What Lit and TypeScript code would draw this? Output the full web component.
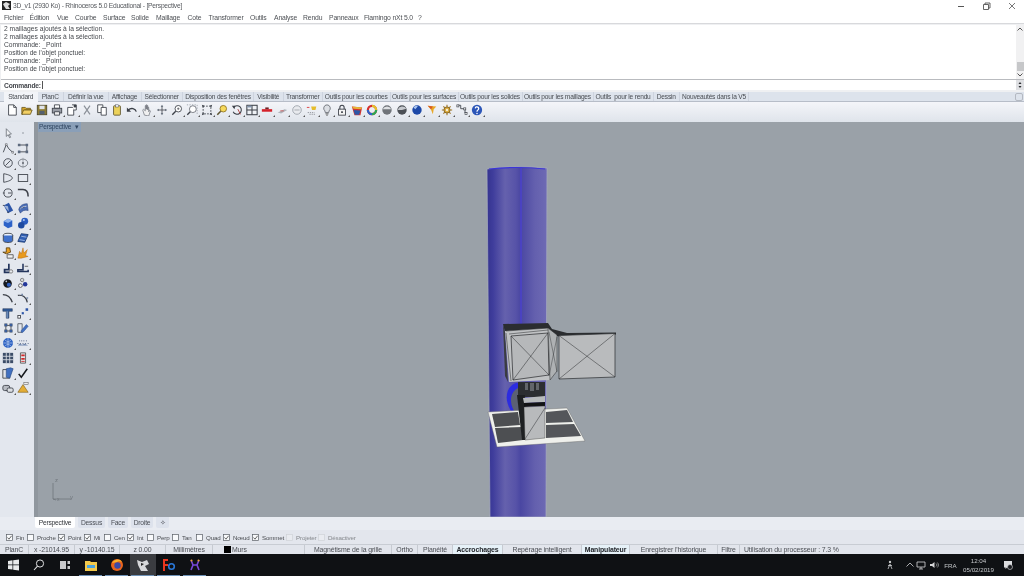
import { LitElement, html, css, svg } from 'lit';
import { customElement } from 'lit/decorators.js';

const MENU: Array<[string, number]> = [
  ['Fichier', 25.5], ['Édition', 27.5], ['Vue', 18], ['Courbe', 28], ['Surface', 28], ['Solide', 25],
  ['Maillage', 31.5], ['Cote', 21], ['Transformer', 41.5], ['Outils', 24], ['Analyse', 29], ['Rendu', 26],
  ['Panneaux', 35], ['Flamingo nXt 5.0', 54], ['?', 10],
];

const HISTORY = [
  '2 maillages ajoutés à la sélection.',
  '2 maillages ajoutés à la sélection.',
  'Commande: _Point',
  "Position de l'objet ponctuel:",
  'Commande: _Point',
  "Position de l'objet ponctuel:",
];

const TABS: Array<[string, number]> = [
  ['Standard', 33.5], ['PlanC', 26.5], ['Définir la vue', 44.5], ['Affichage', 33], ['Sélectionner', 41.5],
  ['Disposition des fenêtres', 71], ['Visibilité', 29.5], ['Transformer', 39.5], ['Outils pour les courbes', 67.5],
  ['Outils pour les surfaces', 68], ['Outils pour les solides', 64], ['Outils pour les maillages', 71],
  ['Outils  pour le rendu', 60], ['Dessin', 26.5], ['Nouveautés dans la V5', 69],
];

const VIEW_TABS: Array<[string, number]> = [['Perspective', 40], ['Dessus', 27], ['Face', 20], ['Droite', 22], ['✧', 13]];

const OSNAPS: Array<[string, number, boolean, boolean]> = [
  ['Fin', 21, true, false], ['Proche', 31, false, false], ['Point', 26, true, false], ['Mi', 20, true, false],
  ['Cen', 23, false, false], ['Int', 20, true, false], ['Perp', 25, false, false], ['Tan', 24, false, false],
  ['Quad', 27, false, false], ['Nœud', 29, true, false], ['Sommet', 34, true, false], ['Projeter', 32, false, true],
  ['Désactiver', 45, false, true],
];

const STATUS: Array<[string, number, string]> = [
  ['PlanC', 29, ''], ['x -21014.95', 46, ''], ['y -10140.15', 45, ''], ['z 0.00', 46, ''], ['Millimètres', 47, ''],
  ['Murs', 92, 'layer'], ['Magnétisme de la grille', 87, ''], ['Ortho', 26, ''], ['Planéité', 35, ''],
  ['Accrochages', 50, 'on'], ['Repérage intelligent', 79, ''], ['Manipulateur', 48, 'on'],
  ['Enregistrer l\'historique', 88, ''], ['Filtre', 22, ''], ['Utilisation du processeur : 7.3 %', 120, 'fill'],
];

const K = '#3c4048';

// toolbar artwork, all on a 14x14 box
const TOP_ICONS = [
  svg`<path d="M3 1h6l3 3v9H3z" fill="#fff" stroke="${K}"/><path d="M9 1v3h3" fill="none" stroke="${K}"/>`,
  svg`<path d="M1 4h4l1 1h5v2H4l-2 5H1z" fill="#d9a92c" stroke="#6d5a1e"/><path d="M3 7h10l-2 5H1z" fill="#f2cf63" stroke="#6d5a1e"/>`,
  svg`<rect x="1.5" y="1.5" width="11" height="11" fill="#8d7c34" stroke="#4c4526"/><rect x="4" y="2" width="6" height="4" fill="#dfe3ea"/><rect x="4" y="8" width="6" height="4" fill="#55606f"/>`,
  svg`<path d="M4 1h6v4H4z" fill="#fff" stroke="${K}"/><rect x="1.5" y="5" width="11" height="5.5" fill="#9a9ea6" stroke="${K}"/><path d="M4 9h6v4H4z" fill="#eee" stroke="${K}"/>`,
  svg`<path d="M2 4h7v9H2z" fill="#fff" stroke="${K}"/><path d="M7 1h5v6H9" fill="#fff" stroke="${K}"/><rect x="9" y="1" width="3" height="3" fill="${K}"/>`,
  svg`<path d="M3.5 2l7 10M10.5 2l-7 10" stroke="#8b9098" stroke-width="1.4" fill="none"/>`,
  svg`<path d="M2 1h6v9H2z" fill="#fff" stroke="${K}"/><path d="M6 4h6v9H6z" fill="#fff" stroke="${K}"/>`,
  svg`<rect x="3" y="2" width="8" height="11" rx="1" fill="#ecd25a" stroke="#5d5430"/><rect x="5" y="1" width="4" height="2.5" fill="#fff" stroke="${K}" stroke-width=".6"/>`,
  svg`<path d="M12 9C11 5 6 4 2.5 7" fill="none" stroke="${K}" stroke-width="1.5"/><path d="M1 4v5h5z" fill="${K}"/>`,
  svg`<path d="M4 13L2 7l1-1 2 2V2h1v4-5h1v5-4h1v5-3h1v5l1-2 1 1-2 6z" fill="#f0f0f0" stroke="#6a6e76" stroke-width=".8"/>`,
  svg`<path d="M7 2v10M2 7h10" stroke="${K}" stroke-width=".9"/><path d="M7 1L5.5 3.5h3zM7 13l-1.5-2.5h3zM1 7l2.5-1.5v3zM13 7l-2.5-1.5v3z" fill="#6b7480"/>`,
  svg`<circle cx="8.5" cy="5.5" r="3.8" fill="#fff" stroke="${K}"/><path d="M5.5 8.5L1.5 12.5" stroke="${K}" stroke-width="1.6"/><path d="M7 5.5h3M8.5 4v3" stroke="${K}" stroke-width=".7"/>`,
  svg`<circle cx="8" cy="6" r="4" fill="#fff" stroke="#6a6e76"/><path d="M5 9l-3.5 3.5" stroke="${K}" stroke-width="1.6"/><path d="M1 1h12v12" fill="none" stroke="#9aa0a8" stroke-dasharray="1.5 1.5"/>`,
  svg`<path d="M2.5 2.5h9v9h-9z" fill="none" stroke="${K}" stroke-dasharray="2 1.4"/><path d="M1 1l3 1-2 2zM13 1l-1 3-2-2zM1 13l1-3 2 2zM13 13l-3-1 2-2z" fill="${K}"/>`,
  svg`<circle cx="8.5" cy="5.5" r="3.8" fill="#f6d95c" stroke="#8d7220"/><path d="M5.5 8.5L1.5 12.5" stroke="#5d5430" stroke-width="1.8"/>`,
  svg`<path d="M3 4a5 5 0 1 1-.5 5" fill="none" stroke="${K}" stroke-width="1.2"/><path d="M1 2l4 0-1 4z" fill="${K}"/><path d="M8 6l3 6" stroke="#a33" stroke-width="1"/>`,
  svg`<rect x="1" y="1.5" width="12" height="11" fill="#eef1f5" stroke="${K}" stroke-width="1.2"/><path d="M7 1.5v11M1 7h12" stroke="${K}" stroke-width="1.2"/><rect x="1.5" y="2" width="5" height="2" fill="#8294ad"/>`,
  svg`<rect x="1" y="6" width="12" height="3" fill="#d5222a"/><rect x="5" y="4" width="4" height="2" fill="#6e2226"/>`,
  svg`<path d="M2 10l8-4 3 1-7 4z" fill="#aeb3ba"/><path d="M5 8h4" stroke="#c55" stroke-width="1"/>`,
  svg`<circle cx="7" cy="7" r="5" fill="#e8eaee" stroke="#9aa0a8"/><path d="M4 7h6" stroke="#a0a5ac"/>`,
  svg`<path d="M6 3h6l-1 4H7z" fill="#e6bd2c"/><path d="M2 10h8M4 12h7" stroke="#8c8f96" stroke-dasharray="1.5 1"/><path d="M1 4h3" stroke="#d33"/>`,
  svg`<path d="M7 1a4 4 0 0 1 2.5 7L9 10H5l-.5-2A4 4 0 0 1 7 1z" fill="#dcdfe4" stroke="#686c74"/><path d="M5.2 11.5h3.6M6 13h2" stroke="#555"/>`,
  svg`<rect x="3" y="6" width="8" height="7" fill="#f4f4f4" stroke="${K}"/><path d="M4.5 6V4a2.5 2.5 0 0 1 5 0v2" fill="none" stroke="${K}" stroke-width="1.2"/><rect x="6" y="8.5" width="2" height="2" fill="${K}"/>`,
  svg`<path d="M1 3l12 1-2 9H4z" fill="#d5352e"/><path d="M3 7l8 .5-1.5 5H4.5z" fill="#2d57a8"/><path d="M1 3l12 1-1 2-9-.5z" fill="#e6b536"/>`,
  svg`<circle cx="7" cy="7" r="4.8" fill="none" stroke="#d52f2f" stroke-width="2.6"/><path d="M7 2.2a4.8 4.8 0 0 1 4.8 4.8" fill="none" stroke="#e5c22c" stroke-width="2.6"/><path d="M11.8 7a4.8 4.8 0 0 1-4.8 4.8" fill="none" stroke="#2aa852" stroke-width="2.6"/><path d="M7 11.8A4.8 4.8 0 0 1 2.2 7" fill="none" stroke="#2f62c8" stroke-width="2.6"/>`,
  svg`<circle cx="7" cy="7" r="5.5" fill="#70747a"/><path d="M2 6a5.5 5.5 0 0 1 10 0z" fill="#dfe1e4"/>`,
  svg`<circle cx="7" cy="7" r="5.5" fill="#4c5056"/><path d="M2 7a5.5 5.5 0 0 1 10-1.5L7 7z" fill="#c6c9ce"/>`,
  svg`<circle cx="7" cy="7" r="5.5" fill="#1d49a8"/><path d="M3 4a4 4 0 0 1 5-1.5L5 6z" fill="#a8c4f0"/>`,
  svg`<path d="M2 2l10 1-3 3-1 6-2-5z" fill="#e8a828"/><path d="M2 2l6 1-2 3z" fill="#d85a28"/>`,
  svg`<circle cx="7" cy="7" r="3.6" fill="#d9a83a" stroke="#7b5e1e"/><circle cx="7" cy="7" r="1.4" fill="#f6f0d8"/><path d="M7 1v2.4M7 10.6V13M1 7h2.4M10.6 7H13M2.8 2.8l1.7 1.7M9.5 9.5l1.7 1.7M11.2 2.8L9.5 4.5M4.5 9.5l-1.7 1.7" stroke="#9d7426" stroke-width="1.3"/>`,
  svg`<path d="M2.5 1.5h3v4h5v5h2" fill="none" stroke="${K}"/><rect x="1" y="1" width="2.4" height="2.4" fill="#fff" stroke="${K}" stroke-width=".8"/><rect x="9" y="4.5" width="2.4" height="2.4" fill="#fff" stroke="${K}" stroke-width=".8"/><rect x="10.5" y="10" width="2.4" height="2.4" fill="#fff" stroke="${K}" stroke-width=".8"/>`,
  svg`<circle cx="7" cy="7" r="6" fill="#2c56b8"/><path d="M5 5a2 2 0 1 1 3 2c-1 .5-1 1-1 2" fill="none" stroke="#fff" stroke-width="1.5"/><circle cx="7" cy="11" r=".9" fill="#fff"/>`,
];

const LEFT_ICONS = [
  svg`<path d="M5 2v9l2.2-2 1.6 3.5 1.2-.5L8.4 8.5l2.6-.3z" fill="#eef0f3" stroke="#555b64" stroke-width=".8"/>`,
  svg`<rect x="6" y="6" width="2" height="2" fill="#aeb3bb"/>`,
  svg`<path d="M1.5 12L5 3l3 5 4.5 4" fill="none" stroke="${K}"/><path d="M4 2h2v2H4zM11.5 11h2v2h-2z" fill="#fff" stroke="${K}" stroke-width=".6"/>`,
  svg`<path d="M2.5 3.5h9v8h-9" fill="none" stroke="${K}"/><path d="M1 2h3v3H1zM10 2h3v3h-3zM10 10h3v3h-3zM1 10h3v3H1z" fill="#5d6a7e"/>`,
  svg`<circle cx="7" cy="7" r="5" fill="none" stroke="${K}"/><path d="M4 10l6-6" stroke="${K}"/>`,
  svg`<ellipse cx="7" cy="7" rx="5.5" ry="4.5" fill="none" stroke="#6c717a"/><circle cx="7" cy="7" r="1.2" fill="${K}"/><path d="M7 1v12" stroke="#9aa0a8"/>`,
  svg`<path d="M2 2c6 1 10 3 10 5s-4 4-10 5z" fill="none" stroke="${K}"/>`,
  svg`<rect x="1.5" y="3" width="11" height="8" fill="none" stroke="${K}"/>`,
  svg`<circle cx="7" cy="7" r="4.8" fill="none" stroke="${K}"/><path d="M7 7h4M1 7h2" stroke="${K}"/>`,
  svg`<path d="M1 3h6c4 0 6 3 6 8" fill="none" stroke="${K}" stroke-width="1.8"/>`,
  svg`<path d="M2 4l6-3 5 9-6 3z" fill="#2c55a8"/><path d="M2 4l5 1 1 6z" fill="#9fb4d8"/><path d="M1 4h2M6 12h2" stroke="${K}"/>`,
  svg`<path d="M2 9c1-5 5-7 10-7l1 8c-4-1-7 0-9 3z" fill="#4a6db5" stroke="#28417a" stroke-width=".6"/><path d="M4 8c2-2 4-3 7-3" stroke="#d8dde8"/>`,
  svg`<path d="M2 5l5-3 5 2v7l-5 2-5-3z" fill="#2c62c8"/><path d="M2 5l5 2 5-3-5-2z" fill="#8fb2ea"/>`,
  svg`<circle cx="9" cy="5" r="4" fill="#2a5cc0"/><circle cx="5" cy="9.5" r="3.8" fill="#1e4aa0"/><circle cx="8" cy="3.5" r="1.2" fill="#b0c8f0"/>`,
  svg`<ellipse cx="7" cy="4" rx="5.5" ry="2.5" fill="#eaf0fa" stroke="${K}"/><path d="M1.5 4v6c0 3 11 3 11 0V4" fill="#3e70cc" stroke="${K}"/>`,
  svg`<path d="M1 11l4-9 8 1-4 9z" fill="#2f5fb5" stroke="#1d3a70"/><path d="M3 9l6 1M5 5l6 1" stroke="#a9bfe6"/>`,
  svg`<path d="M1 6h4V1h4l1 5-5 2z" fill="#e8a020" stroke="#5c4214"/><path d="M6 9h7v4H6z" fill="#f1f1f1" stroke="#555"/>`,
  svg`<path d="M1 13l2-8 2 3 2-7 1 6 4-4-2 7 3 1-8 2z" fill="#e89a1c" stroke="#b26410" stroke-width=".5"/>`,
  svg`<path d="M8 2v7H3v3h6" fill="none" stroke="#23345c" stroke-width="2"/><circle cx="10.5" cy="11" r="2" fill="#e8ebef" stroke="#777"/>`,
  svg`<path d="M7 2v7H1v2h12V9" fill="none" stroke="#23345c" stroke-width="1.8"/><path d="M9 5h4" stroke="#555"/>`,
  svg`<circle cx="6.5" cy="7.5" r="5" fill="#16191f"/><circle cx="8" cy="9" r="2.4" fill="#2e5fc0"/><circle cx="5" cy="5" r="1" fill="#c8ccd4"/>`,
  svg`<circle cx="4" cy="10" r="2.2" fill="#f0f1f3" stroke="#555"/><circle cx="9.5" cy="8.5" r="2.6" fill="#24389a"/><circle cx="6" cy="3.5" r="2" fill="#d5d8dd" stroke="#777"/>`,
  svg`<path d="M1 3c5 0 9 3 11 9" fill="none" stroke="${K}" stroke-width="1.5"/>`,
  svg`<path d="M1 4c5-1 10 2 11 8" fill="none" stroke="${K}" stroke-width="1.4"/><path d="M5 2h2v2H5zM11 6h2v2h-2z" fill="#7588a8"/>`,
  svg`<path d="M1 2h11v3H8v8H5V5H1z" fill="#2f5a98" stroke="#1c2e4e" stroke-width=".6"/><path d="M6 5v8" stroke="#9cb3d6"/>`,
  svg`<rect x="1" y="10" width="3" height="3" fill="#fff" stroke="${K}"/><rect x="5.5" y="6" width="2.5" height="2.5" fill="#2c55a8"/><rect x="10" y="1.5" width="3" height="3" fill="#2c55a8"/>`,
  svg`<path d="M3 2h3v3H3zM9 2h3v3H9zM3 9h3v3H3zM9 9h3v3H9z" fill="#3a66b0" stroke="${K}" stroke-width=".5"/><path d="M6 4l3 0M4.5 5v4M10.5 5v4M6 10.5h3" stroke="${K}"/>`,
  svg`<path d="M1 2h5v10H1z" fill="none" stroke="#555b64"/><path d="M5 10l6-7 2 2-6 7H5z" fill="#4271c4" stroke="#244a90" stroke-width=".6"/>`,
  svg`<circle cx="7" cy="7" r="5.8" fill="#2d62c4"/><path d="M1.5 7h11M7 1v12M3 3c3 3 5 3 8 0M3 11c3-3 5-3 8 0" stroke="#cfdcf4" stroke-width=".7" fill="none"/>`,
  svg`<path d="M1 10l2-2 3 1 3-1 4 2z" fill="#6c84ae"/><path d="M3 4v1M5.5 4v1M8 4v1M11 4v1M1 7v1M4 7v1M7 7v1M10 7v1M13 7v1" stroke="#3a4c70"/>`,
  svg`<path d="M1 1h12v12H1z" fill="#3c4d68"/><path d="M5 1v12M9 1v12M1 5h12M1 9h12" stroke="#d9dee7"/>`,
  svg`<path d="M4 1h6v12H4z" fill="#e2e4e8" stroke="#555"/><path d="M5 3h4v2H5zM5 7h4v2H5z" fill="#d02a2a"/><path d="M5 11h4" stroke="#d02a2a"/>`,
  svg`<path d="M1 3h8v10H1z" fill="#e3e5e8" stroke="${K}"/><path d="M5 2l5-1 3 1-4 11-4-1z" fill="#4170c0" stroke="#24447c" stroke-width=".7"/>`,
  svg`<path d="M2 8l3 4 7-10" fill="none" stroke="#15181d" stroke-width="1.8"/>`,
  svg`<rect x="1" y="4" width="8" height="6" rx="2" fill="#b8bcc3" stroke="${K}"/><rect x="6" y="7" width="7" height="5" rx="1.5" fill="#dcdfe3" stroke="${K}"/>`,
  svg`<path d="M7 3l6 9H1z" fill="#e3ad36" stroke="#7d5c16" stroke-width=".7"/><rect x="8" y="0.5" width="5" height="2.5" fill="#eee" stroke="#555" stroke-width=".6"/>`,
];

const TOP_FLYOUT = new Set([3, 4, 8, 9, 11, 12, 13, 14, 15, 16, 17, 18, 19, 20, 21, 22, 23, 24, 25, 26, 27, 28, 29, 30, 31]);

@customElement('app-root')
export class AppRoot extends LitElement {
  static styles = css`
    :host {
      display: flex;
      flex-direction: column;
      width: 1024px;
      height: 576px;
      overflow: hidden;
      background: #e2e5ec;
      font-family: 'Liberation Sans', Arial, sans-serif;
      font-size: 6.7px;
      letter-spacing: -0.2px;
      color: #3a3d42;
      filter: blur(0.3px);
    }

    .title-bar {
      height: 11px;
      background: #fff;
      display: flex;
      align-items: center;
      padding-left: 2px;
      color: #55585d;
      font-size: 6.7px;
      letter-spacing: -0.23px;
    }

    .title-bar .app-icon {
      width: 9px;
      height: 9px;
      margin-right: 2px;
      flex: none;
    }

    .win-buttons {
      margin-left: auto;
      display: flex;
    }

    .win-buttons svg {
      width: 25px;
      height: 10px;
      display: block;
    }

    .menu {
      height: 12px;
      background: #fff;
      display: flex;
      align-items: center;
      padding-left: 4px;
      color: #4d5055;
      font-size: 6.8px;
      letter-spacing: -0.15px;
    }

    .menu span {
      flex: none;
    }

    .command {
      height: 69px;
      box-sizing: border-box;
      background: #eff0f2;
      border-top: 1px solid #d8d9dc;
      display: flex;
      flex-direction: column;
      padding: 0.5px 0 2px 1px;
    }

    .history-row {
      flex: 1;
      display: flex;
      min-height: 0;
    }

    .history {
      flex: 1;
      background: #fff;
      line-height: 8px;
      padding-left: 3px;
      font-size: 6.7px;
      letter-spacing: 0;
      color: #45484d;
    }

    .scroll {
      width: 8px;
      display: flex;
      flex-direction: column;
      align-items: center;
      justify-content: space-between;
      padding: 2px 0;
      background: #f1f1f2;
      position: relative;
      color: #555;
    }

    .scroll svg {
      width: 6px;
      height: 4px;
    }

    .scroll .thumb {
      width: 7px;
      height: 9px;
      background: #c6c7c9;
      position: absolute;
      bottom: 8px;
    }

    .prompt {
      height: 11px;
      flex: none;
      background: #fff;
      border-top: 1px solid #b9bbbf;
      box-sizing: border-box;
      display: flex;
      align-items: center;
      padding-left: 3px;
      font-weight: 700;
      color: #44474c;
    }

    .prompt i {
      width: 1px;
      height: 8px;
      margin-left: 1px;
      background: #555;
    }

    .prompt svg {
      margin-left: auto;
      width: 8px;
      height: 10px;
      flex: none;
      display: block;
    }

    .tabs {
      height: 10px;
      flex: none;
      display: flex;
      align-items: flex-end;
      padding-left: 4px;
      background: #dde3ec;
      border-bottom: 1px solid #b7bdc8;
      box-sizing: border-box;
      font-size: 6.6px;
      letter-spacing: -0.2px;
      color: #484c52;
    }

    .tabs span {
      flex: none;
      height: 9px;
      line-height: 9px;
      text-align: center;
      white-space: pre;
      border-right: 1px solid #cdd3de;
      box-sizing: border-box;
    }

    .tabs span.active {
      background: #f2f4f8;
      height: 10px;
      margin-bottom: -1px;
      border-right: none;
    }

    .tabs .tab-end {
      margin-left: auto;
      margin-right: 1px;
      width: 8px;
      height: 8px;
      flex: none;
      border: 1px solid #b4b9c2;
      border-radius: 2px;
      box-sizing: border-box;
    }

    .toolbar {
      height: 20px;
      flex: none;
      box-sizing: border-box;
      display: flex;
      align-items: center;
      padding: 0 0 4px 4.5px;
      background: linear-gradient(#f4f5f9, #dfe4eb);
    }

    .icon {
      flex: none;
      width: 15px;
      height: 15px;
      display: flex;
      align-items: center;
      justify-content: center;
      position: relative;
    }

    .icon svg {
      width: 12px;
      height: 12px;
      display: block;
    }

    .icon.fly::after {
      content: '';
      position: absolute;
      right: 0;
      bottom: 1px;
      border-left: 2px solid transparent;
      border-bottom: 2px solid #555;
    }

    .main {
      flex: 1;
      display: flex;
      min-height: 0;
    }

    .side {
      width: 34px;
      flex: none;
      box-sizing: border-box;
      padding: 3.5px 0 0 0.5px;
      display: grid;
      grid-template-columns: 15px 15px;
      grid-auto-rows: 15px;
      align-content: start;
      background: #e3e7ee;
    }

    .viewport {
      flex: 1;
      position: relative;
      background: #9aa1a8;
      border-left: 4px solid #90979e;
      box-sizing: border-box;
    }

    .viewport svg.scene {
      position: absolute;
      left: -4px;
      top: 0;
      width: 990px;
      height: 395px;
    }

    .viewport .vp-label {
      position: absolute;
      left: 0;
      top: 0;
      width: 43px;
      height: 10px;
      line-height: 10px;
      background: #8a9fb8;
      color: #2f4560;
      padding: 0 2px 0 1px;
      box-sizing: border-box;
      font-size: 6.6px;
      display: flex;
      justify-content: space-between;
    }

    .view-tabs {
      height: 13px;
      flex: none;
      display: flex;
      gap: 3px;
      padding-left: 35px;
      background: #e9ecf2;
      font-size: 6.7px;
      color: #4a4e55;
    }

    .view-tabs span {
      height: 11px;
      line-height: 11px;
      text-align: center;
      background: #dde2ec;
      border-radius: 0 0 2px 2px;
      flex: none;
    }

    .view-tabs span.active {
      background: #fff;
      color: #33363b;
    }

    .osnap {
      height: 14px;
      flex: none;
      display: flex;
      align-items: center;
      padding-left: 6px;
      background: #e3e6ed;
      font-size: 6.2px;
      letter-spacing: -0.15px;
      color: #4a4d52;
    }

    .osnap label {
      flex: none;
      display: flex;
      align-items: center;
      gap: 3px;
    }

    .osnap label.off {
      color: #85888d;
    }

    .osnap svg {
      width: 7px;
      height: 7px;
      flex: none;
    }

    .status {
      height: 10px;
      flex: none;
      display: flex;
      background: #e2e5ec;
      border-top: 1px solid #c8ccd3;
      box-sizing: border-box;
      font-size: 6.9px;
      letter-spacing: -0.12px;
      color: #4b4e54;
    }

    .status span {
      flex: none;
      text-align: center;
      line-height: 9px;
      border-right: 1px solid #c6cad1;
      box-sizing: border-box;
      white-space: nowrap;
    }

    .status span.on {
      background: #e6f1f8;
      color: #22252a;
      font-weight: 700;
    }

    .status span.layer {
      display: flex;
      align-items: center;
      padding-left: 11px;
      gap: 1px;
    }

    .status span.layer i {
      width: 7px;
      height: 7px;
      background: #000;
    }

    .status span.fill {
      text-align: left;
      padding-left: 4px;
      border-right: none;
    }

    .taskbar {
      height: 22px;
      flex: none;
      background: #0f1114;
      display: flex;
      align-items: stretch;
      color: #c5c7ca;
      font-size: 6.2px;
      letter-spacing: 0;
    }

    .task {
      flex: none;
      width: 26px;
      display: flex;
      align-items: center;
      justify-content: center;
      position: relative;
    }

    .task svg {
      width: 14px;
      height: 14px;
      display: block;
    }

    .task.run::after {
      content: '';
      position: absolute;
      left: 1px;
      right: 2px;
      bottom: 0;
      height: 1px;
      background: #6f93b8;
    }

    .task.active {
      background: #3a3c40;
    }

    .tray {
      margin-left: auto;
      display: flex;
      align-items: center;
      padding-right: 11px;
    }

    .tray svg {
      width: 10px;
      height: 10px;
      display: block;
      flex: none;
    }

    .tray .person {
      margin-right: 10px;
    }

    .tray .caret {
      margin-right: 1px;
    }

    .tray .net {
      margin-right: 3px;
    }

    .lang {
      margin: 0 6.5px 0 5.5px;
    }

    .clock {
      text-align: center;
      line-height: 9px;
      margin-right: 9px;
    }
  `;

  private icon(art: unknown, fly: boolean) {
    return html`<div class="icon ${fly ? 'fly' : ''}"><svg viewBox="0 0 14 14">${art}</svg></div>`;
  }

  private check(on: boolean, off: boolean) {
    const line = off ? '#cfd2d8' : '#5a5e66';
    return html`<svg viewBox="0 0 7 7">
      <rect x=".5" y=".5" width="6" height="6" fill=${off ? '#e9ebf0' : '#f8f9fb'} stroke=${line} stroke-width=".7"></rect>
      ${on ? svg`<path d="M1.5 3.5l1.5 1.7 2.6-3.4" fill="none" stroke="#444" stroke-width=".8"/>` : ''}
    </svg>`;
  }

  private scene() {
    // drawn in screen coordinates: the viewport begins at 34,122
    return svg`
      <defs>
        <linearGradient id="tube" x1="0" x2="1" y1="0" y2="0">
          <stop offset="0" stop-color="#35348f"/>
          <stop offset=".1" stop-color="#3f3d9c"/>
          <stop offset=".3" stop-color="#6561ad"/>
          <stop offset=".48" stop-color="#5753a8"/>
          <stop offset=".56" stop-color="#4a47a2"/>
          <stop offset=".8" stop-color="#6460ae"/>
          <stop offset="1" stop-color="#6e6ab4"/>
        </linearGradient>
      </defs>
      <path d="M487 169Q516 165 547 168L546 517H490z" fill="url(#tube)" stroke="#a9aec0" stroke-width=".7"/>
      <path d="M489 169Q516 166 545 169" fill="none" stroke="#3b35d8" stroke-width="1.2"/>
      <path d="M521 168V345" stroke="#4a3fe0" stroke-width="1"/>
      <path d="M516 383C507 386 503 398 511 411L519 411V383z" fill="#2c2ce0"/>
      <path d="M518 388C510 392 509 402 514 411L522 411V388z" fill="#5b6074"/>

      <path d="M488 412L567 408L585 441L497 447z" fill="#eff0ec" stroke="#666" stroke-width=".4"/>
      <path d="M492 414L518 412L520 425L495 427z" fill="#4d4f52"/>
      <path d="M495 428L522 427L523 440L498 443z" fill="#4d4f52"/>
      <path d="M546 412L567 410L573 422L546 423z" fill="#54565a"/>
      <path d="M546 425L574 424L581 436L546 438z" fill="#54565a"/>

      <path d="M518 382H545V397H518z" fill="#2c2e31"/>
      <path d="M525 383h3v7h-3zM530 383h4v8h-4zM536 383h3v7h-3z" fill="#62656a"/>
      <path d="M517 395L525 395L526 440L522 440z" fill="#1e2022"/>
      <path d="M523 398L545 396V402L524 403z" fill="#b8bbbd"/>
      <path d="M524 403L545 402V406L524 407z" fill="#121315"/>
      <path d="M524 407L545 406V438L525 440z" fill="#b8babc" stroke="#333" stroke-width=".4"/>
      <path d="M525 439L545 408" stroke="#44474a" stroke-width=".6" fill="none"/>

      <path d="M503 324L548 323L552 329L567 333L616 332.5V334.5L559 336.5L557 336L549 330L505 332z" fill="#2b2d30"/>
      <path d="M503 324L505 332L508 382L505 376z" fill="#3a3c40"/>
      <path d="M505 331L549 328L550 380L509 382z" fill="#c0c2c4"/>
      <path d="M511 336L548 333L549 375L513 380z" fill="#b6b8ba" stroke="#26282b" stroke-width=".7"/>
      <path d="M511 336L549 375M548 333L513 380M506 331L549 328M509 334L548 330M506 333L511 381" stroke="#26282b" stroke-width=".5" fill="none"/>
      <path d="M548 328L557 335L557 371L550 380z" fill="#aeb1b3" stroke="#26282b" stroke-width=".5"/>
      <path d="M549 332L557 372M557 337L549 376" stroke="#26282b" stroke-width=".4" fill="none"/>
      <path d="M559 335.5L615 333.5V377L559 379z" fill="#b9bbbd" stroke="#2a2c2f" stroke-width=".7"/>
      <path d="M559 335.5L615 377M615 333.5L559 379" stroke="#2a2c2f" stroke-width=".5" fill="none"/>
    `;
  }

  render() {
    return html`
      <div class="title-bar">
        <svg class="app-icon" viewBox="0 0 9 9">
          <rect width="9" height="9" fill="#222"></rect>
          <path d="M1 3l3-2 4 2-2 2 2 3H4L2 5z" fill="#ddd"></path>
        </svg>
        <span>3D_v1 (2930 Ko) - Rhinoceros 5.0 Educational - [Perspective]</span>
        <div class="win-buttons">
          <svg viewBox="0 0 25 10"><path d="M9 5.5h6" stroke="#555"></path></svg>
          <svg viewBox="0 0 25 10"><path d="M9.5 3.5h5v5h-5zM11 3.5V2h5v5h-1.5" fill="none" stroke="#555" stroke-width=".9"></path></svg>
          <svg viewBox="0 0 25 10"><path d="M10 2l6 6M16 2l-6 6" stroke="#555" stroke-width=".8"></path></svg>
        </div>
      </div>
      <div class="menu">
        ${MENU.map(([label, w]) => html`<span style="width:${w}px">${label}</span>`)}
      </div>
      <div class="command">
        <div class="history-row">
          <div class="history">${HISTORY.map(line => html`<div>${line}</div>`)}</div>
          <div class="scroll">
            <svg viewBox="0 0 6 4"><path d="M.5 3.5L3 1l2.5 2.5" fill="none" stroke="#555"></path></svg>
            <div class="thumb"></div>
            <svg viewBox="0 0 6 4"><path d="M.5 .5L3 3l2.5-2.5" fill="none" stroke="#555"></path></svg>
          </div>
        </div>
        <div class="prompt">Commande:<i></i>
          <svg viewBox="0 0 8 10"><rect width="8" height="10" fill="#dfe0e3"></rect><path d="M2.5 4L4 2l1.5 2zM2.5 6L4 8l1.5-2z" fill="#2a2c30"></path></svg>
        </div>
      </div>
      <div class="tabs">
        ${TABS.map(([label, w], i) => html`<span class=${i === 0 ? 'active' : ''} style="width:${w}px">${label}</span>`)}
        <div class="tab-end"></div>
      </div>
      <div class="toolbar">
        ${TOP_ICONS.map((art, i) => this.icon(art, TOP_FLYOUT.has(i)))}
      </div>
      <div class="main">
        <div class="side">
          ${LEFT_ICONS.map((art, i) => this.icon(art, i > 1 && i % 3 !== 0))}
        </div>
        <div class="viewport">
          <svg class="scene" viewBox="34 122 990 395">${this.scene()}
            <path d="M53 483V499H71M53 499l3 1" fill="none" stroke="#70767c" stroke-width=".8"></path>
            <text x="55" y="482" font-size="6" fill="#70767c">z</text>
            <text x="57" y="501" font-size="5" fill="#70767c">x</text>
            <text x="70" y="499" font-size="6" fill="#70767c">y</text>
          </svg>
          <div class="vp-label"><span>Perspective</span><span>▾</span></div>
        </div>
      </div>
      <div class="view-tabs">
        ${VIEW_TABS.map(([label, w], i) => html`<span class=${i === 0 ? 'active' : ''} style="width:${w}px">${label}</span>`)}
      </div>
      <div class="osnap">
        ${OSNAPS.map(([label, w, on, off]) => html`<label class=${off ? 'off' : ''} style="width:${w}px">${this.check(on, off)}${label}</label>`)}
      </div>
      <div class="status">
        ${STATUS.map(([label, w, kind]) => html`<span class=${kind} style="width:${w}px">${kind === 'layer' ? html`<i></i>` : ''}${label}</span>`)}
      </div>
      <div class="taskbar">
        <div class="task"><svg viewBox="0 0 14 14"><path d="M2 3l4.5-.7v4.2H2zM7.2 2.2L13 1.4v5.1H7.2zM2 7.3h4.5v4.3L2 11zM7.2 7.3H13v5.2l-5.8-.8z" fill="#e8e9ea"></path></svg></div>
        <div class="task"><svg viewBox="0 0 14 14"><circle cx="8" cy="5.5" r="3.6" fill="none" stroke="#e0e1e2"></circle><path d="M5.5 8.2L2 12" stroke="#e0e1e2" stroke-width="1.1"></path></svg></div>
        <div class="task"><svg viewBox="0 0 14 14"><path d="M2 3h6v8H2zM9.5 3H12v3H9.5zM9.5 8H12v3H9.5z" fill="#c9cacc"></path></svg></div>
        <div class="task run"><svg viewBox="0 0 14 14"><path d="M1 3h5l1 1h6v9H1z" fill="#f2c94c"></path><rect x="3" y="7" width="8" height="3" fill="#4aa3e0"></rect></svg></div>
        <div class="task run"><svg viewBox="0 0 14 14"><circle cx="7" cy="7" r="6" fill="#e8641c"></circle><circle cx="7.5" cy="7.5" r="3.2" fill="#3a4aa8"></circle><path d="M2 5c2-4 8-5 10-1-2-1-4-1-5 0z" fill="#f7b32b"></path></svg></div>
        <div class="task run active"><svg viewBox="0 0 14 14"><path d="M1 2l5 2 5-2 2 4-4 2 3 5H5L2 7z" fill="#d7d8da"></path><path d="M5 5l3 1-3 2z" fill="#222"></path></svg></div>
        <div class="task run"><svg viewBox="0 0 14 14"><path d="M1 1h5v2H3v3h3v2H3v5H1z" fill="#e8361e"></path><circle cx="9.5" cy="8.5" r="2.8" fill="none" stroke="#2a78d8" stroke-width="1.6"></circle></svg></div>
        <div class="task run"><svg viewBox="0 0 14 14"><path d="M3 2l2 5-2 5M11 2L9 7l2 5M5 7h4" fill="none" stroke="#7a48d8" stroke-width="1.6"></path><circle cx="3.5" cy="2.5" r="1" fill="#e8a02c"></circle><circle cx="10.5" cy="2.5" r="1" fill="#e8a02c"></circle></svg></div>
        <div class="tray">
          <svg class="person" viewBox="0 0 10 10"><circle cx="5" cy="2" r="1.2" fill="#c8c9cb"></circle><path d="M5 4L3 9M5 4l2 5M3 5.5h4" stroke="#c8c9cb" stroke-width=".8"></path></svg>
          <svg class="caret" viewBox="0 0 10 10"><path d="M1.5 6.5L5 3l3.5 3.5" fill="none" stroke="#d5d6d8" stroke-width=".8"></path></svg>
          <svg class="net" viewBox="0 0 10 10"><path d="M1 2h8v5H1zM3 9h4M5 7v2" fill="none" stroke="#d5d6d8" stroke-width=".8"></path></svg>
          <svg viewBox="0 0 10 10"><path d="M1 4h2l2.5-2v6L3 6H1z" fill="#d5d6d8"></path><path d="M7 3.5c1 1 1 2 0 3M8.3 2.5c1.5 1.5 1.5 3.5 0 5" fill="none" stroke="#d5d6d8" stroke-width=".6"></path></svg>
          <span class="lang">FRA</span>
          <div class="clock">12:04<br />05/02/2019</div>
          <svg viewBox="0 0 10 10"><path d="M1 1h8v6.5H4L2.5 9V7.5H1z" fill="#dcdde0"></path><circle cx="7" cy="7" r="2.5" fill="#1a1c20" stroke="#dcdde0" stroke-width=".6"></circle></svg>
        </div>
      </div>
    `;
  }
}
